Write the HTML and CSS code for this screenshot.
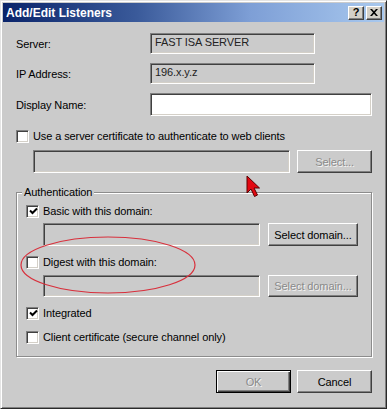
FILE: index.html
```html
<!DOCTYPE html>
<html>
<head>
<meta charset="utf-8">
<link rel="stylesheet" href="styles.css">
</head>
<body>
<div class="window">
  <div class="titlebar">
    <span class="title">Add/Edit Listeners</span>
    <div class="tbtns">
      <span class="tbtn q">?</span>
      <span class="tbtn x"><svg width="8" height="7" viewBox="0 0 8 7"><path d="M0 0h2l2 2.2 2-2.2h2l-3 3.5 3 3.5h-2l-2-2.2-2 2.2h-2l3-3.5z" fill="#000"/></svg></span>
    </div>
  </div>
  <div class="content">
    <div class="row r-server">
      <span class="label">Server:</span>
      <div class="field disabled">FAST ISA SERVER</div>
    </div>
    <div class="row r-ip">
      <span class="label">IP Address:</span>
      <div class="field disabled">196.x.y.z</div>
    </div>
    <div class="row r-display">
      <span class="label">Display Name:</span>
      <div class="field white wide"></div>
    </div>
    <div class="crow r-cert">
      <span class="cb"></span>
      <span class="ctext">Use a server certificate to authenticate to web clients</span>
    </div>
    <div class="frow r-certfield">
      <div class="field disabled certfield"></div>
      <div class="btn dis w74">Select...</div>
    </div>
    <div class="group">
      <span class="gtitle">Authentication</span>
      <div class="crow">
        <span class="cb"><svg class="chk" width="9" height="9" viewBox="0 0 9 9"><path d="M1 3.5 L3.5 6 L8 1.5" fill="none" stroke="#000" stroke-width="2"/></svg></span>
        <span class="ctext">Basic with this domain:</span>
      </div>
      <div class="frow g-field1">
        <div class="field disabled gfield"></div>
        <div class="btn w90">Select domain...</div>
      </div>
      <div class="crow g-digest">
        <span class="cb"></span>
        <span class="ctext">Digest with this domain:</span>
      </div>
      <div class="frow g-field2">
        <div class="field disabled gfield h22"></div>
        <div class="btn dis w90 h22">Select domain...</div>
      </div>
      <div class="crow g-int">
        <span class="cb"><svg class="chk" width="9" height="9" viewBox="0 0 9 9"><path d="M1 3.5 L3.5 6 L8 1.5" fill="none" stroke="#000" stroke-width="2"/></svg></span>
        <span class="ctext">Integrated</span>
      </div>
      <div class="crow g-client">
        <span class="cb"></span>
        <span class="ctext">Client certificate (secure channel only)</span>
      </div>
    </div>
    <div class="buttons">
      <div class="btn default dis">OK</div>
      <div class="btn">Cancel</div>
    </div>
  </div>
  <svg class="ellipse" width="387" height="409" viewBox="0 0 387 409">
    <ellipse cx="108" cy="265" rx="87" ry="28" fill="none" stroke="#d8303c" stroke-width="1.2"/>
  </svg>
  <svg class="cursor" width="16" height="24" viewBox="0 0 16 24">
    <path d="M1 1 L1 18 L5 14 L8.5 21.5 L11.5 20 L8 13 L13.5 13 Z" fill="#e30812" stroke="#5a0000" stroke-width="1"/>
  </svg>
</div>
</body>
</html>
```

FILE: styles.css
```css
* { box-sizing: border-box; }
html, body { margin: 0; padding: 0; }
body {
  font-family: "Liberation Sans", Arial, sans-serif;
  font-size: 11px;
  letter-spacing: -0.1px;
  color: #000;
  background: #cbcbcb;
}
.window {
  position: relative;
  width: 387px;
  height: 409px;
  background: #cbcbcb;
  border: 1px solid;
  border-color: #e4e4e4 #2a2a2a #2a2a2a #e4e4e4;
  box-shadow: inset 1px 1px 0 #fff, inset -1px -1px 0 #808080;
  padding: 1px;
  overflow: hidden;
}
.titlebar {
  height: 19px;
  margin: 1px 1px 0 1px;
  background: linear-gradient(to right, #0a246a 0%, #3a5a9a 35%, #7e9fd6 65%, #a8c8ee 100%);
  display: flex;
  align-items: center;
  justify-content: space-between;
  padding: 0 2px 0 3px;
}
.title {
  color: #fff;
  font-weight: bold;
  font-size: 12px;
  letter-spacing: 0;
}
.tbtns { display: flex; gap: 2px; }
.tbtn {
  width: 16px;
  height: 14px;
  background: #d4d0c8;
  border: 1px solid;
  border-color: #fff #404040 #404040 #fff;
  box-shadow: inset -1px -1px 0 #808080;
  display: flex;
  align-items: center;
  justify-content: center;
  font-weight: bold;
  font-size: 11px;
  line-height: 1;
}
.content {
  padding: 0 13px 0 13px;
  display: flex;
  flex-direction: column;
}
.row {
  display: flex;
  align-items: center;
}
.label {
  width: 135px;
  padding-left: 1px;
}
.r-server { margin-top: 11px; }
.r-ip { margin-top: 9px; }
.r-display { margin-top: 9px; }
.field {
  height: 21px;
  width: 165px;
  border: 1px solid;
  border-color: #808080 #fff #fff #808080;
  box-shadow: inset 1px 1px 0 #404040, inset -1px -1px 0 #d4d0c8;
  padding: 2px 4px;
  line-height: 13px;
  color: #222;
}
.field.disabled { background: #cbcbcb; }
.field.white { background: #fff; }
.field.wide { width: 222px; height: 23px; }
.crow {
  display: flex;
  align-items: center;
  height: 13px;
}
.cb {
  position: relative;
  width: 13px;
  height: 13px;
  flex: none;
  background: #fff;
  border: 1px solid;
  border-color: #808080 #fff #fff #808080;
  box-shadow: inset 1px 1px 0 #404040, inset -1px -1px 0 #d4d0c8;
  display: flex;
  align-items: center;
  justify-content: center;
}
.chk { display: block; margin-left: 1px; }
.ctext { margin-left: 4px; margin-top: -1px; }
.r-cert { margin-top: 14px; padding-left: 1px; }
.frow { display: flex; }
.r-certfield { margin-top: 7px; padding-left: 18px; gap: 7px; }
.certfield { width: 258px; height: 23px; }
.btn {
  height: 23px;
  width: 75px;
  background: #cbcbcb;
  border: 1px solid;
  border-color: #fff #404040 #404040 #fff;
  box-shadow: inset -1px -1px 0 #808080;
  display: flex;
  align-items: center;
  justify-content: center;
  white-space: nowrap;
}
.btn.w74 { width: 75px; }
.btn.w90 { width: 90px; }
.btn.h22, .field.h22 { height: 22px; }
.btn.dis { color: #8a8a8a; text-shadow: 1px 1px 0 #f4f4f4; }
.btn.default {
  border-color: #000;
  box-shadow: inset 1px 1px 0 #fff, inset -1px -1px 0 #404040, inset -2px -2px 0 #808080;
}
.group {
  position: relative;
  margin-top: 19px;
  margin-left: 1px;
  width: 356px;
  border: 1px solid #8c8c8c;
  box-shadow: inset 1px 1px 0 #fff, 1px 1px 0 #fff;
  padding: 12px 0 12px 9px;
  display: flex;
  flex-direction: column;
}
.gtitle {
  position: absolute;
  top: -8px;
  left: 5px;
  padding: 0 2px;
  background: #cbcbcb;
  line-height: 14px;
}
.gfield { width: 217px; height: 23px; }
.g-field1, .g-field2 { margin-left: 17px; gap: 8px; }
.g-field1 { margin-top: 5px; }
.g-digest { margin-top: 10px; }
.g-field2 { margin-top: 6px; }
.g-int { margin-top: 10px; }
.g-client { margin-top: 11px; }
.buttons {
  margin-top: 13px;
  display: flex;
  justify-content: flex-end;
  gap: 6px;
}
.ellipse {
  position: absolute;
  left: -1px;
  top: -1px;
  pointer-events: none;
}
.cursor {
  position: absolute;
  left: 245px;
  top: 174px;
}
```
